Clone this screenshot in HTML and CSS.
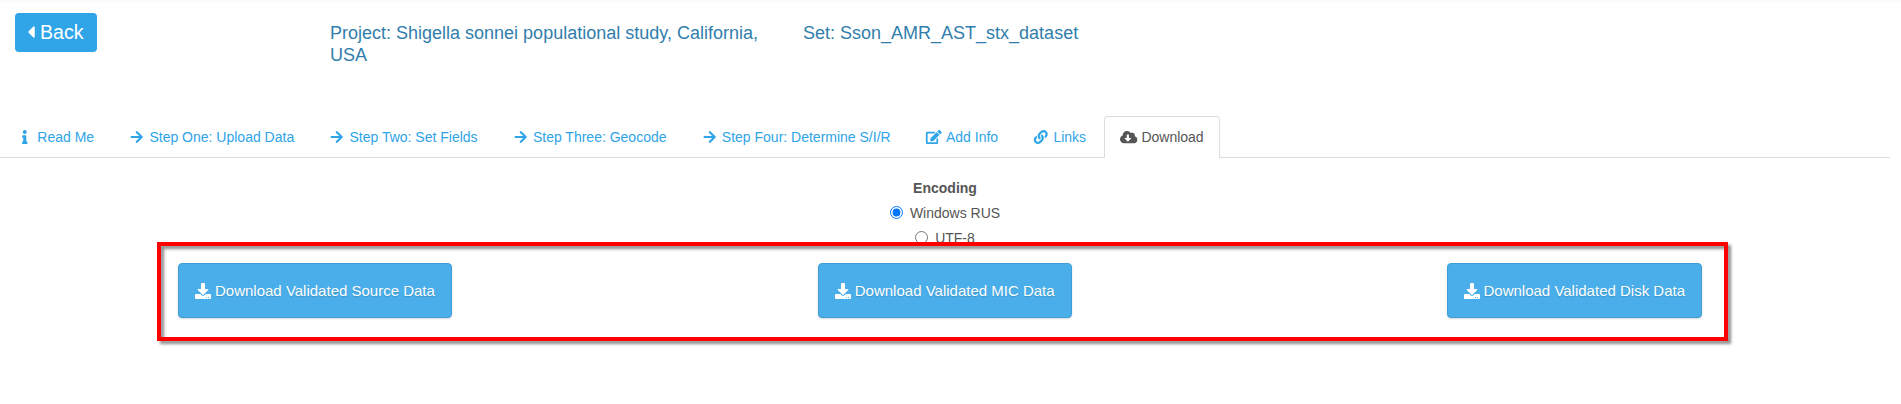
FILE: index.html
```html
<!DOCTYPE html>
<html lang="en">
<head>
<meta charset="utf-8">
<title>Download</title>
<link rel="stylesheet" href="styles.css">
</head>
<body>
<svg class="sprite" aria-hidden="true">
  <symbol id="caret" viewBox="0 0 192 512"><path d="M192 127.338v257.324c0 17.818-21.543 26.741-34.142 14.142L29.196 270.142c-7.81-7.81-7.81-20.474 0-28.284l128.662-128.662c12.599-12.6 34.142-3.676 34.142 14.142z"/></symbol>
  <symbol id="info" viewBox="0 0 192 512"><path d="M20 424.229h20V279.771H20c-11.046 0-20-8.954-20-20V212c0-11.046 8.954-20 20-20h112c11.046 0 20 8.954 20 20v212.229h20c11.046 0 20 8.954 20 20V492c0 11.046-8.954 20-20 20H20c-11.046 0-20-8.954-20-20v-47.771c0-11.046 8.954-20 20-20zM96 0C56.235 0 24 32.235 24 72s32.235 72 72 72 72-32.235 72-72S135.764 0 96 0z"/></symbol>
  <symbol id="arrow" viewBox="0 0 448 512"><path d="M190.5 66.9l22.2-22.2c9.4-9.4 24.6-9.4 33.9 0L441 239c9.4 9.4 9.4 24.6 0 33.9L246.6 467.3c-9.4 9.4-24.6 9.4-33.9 0l-22.2-22.2c-9.5-9.5-9.3-25 .4-34.3L311.4 296H24c-13.3 0-24-10.7-24-24v-32c0-13.3 10.7-24 24-24h287.4L190.9 101.2c-9.8-9.3-10-24.8-.4-34.3z"/></symbol>
  <symbol id="edit" viewBox="0 0 576 512"><path d="M402.6 83.2l90.2 90.2c3.8 3.8 3.8 10 0 13.8L274.4 405.600l-92.800 10.300c-12.400 1.400-22.900-9.100-21.500-21.500l10.300-92.800L388.800 83.200c3.800-3.800 10-3.800 13.800 0zm162-22.900l-48.800-48.800c-15.200-15.200-39.900-15.200-55.200 0l-35.400 35.400c-3.800 3.800-3.800 10 0 13.800l90.200 90.200c3.800 3.800 10 3.800 13.800 0l35.400-35.400c15.200-15.300 15.200-40 0-55.200zM384 346.200V448H64V128h229.800c3.200 0 6.200-1.300 8.500-3.500l40-40c7.600-7.600 2.200-20.500-8.500-20.500H48C21.500 64 0 85.500 0 112v352c0 26.500 21.500 48 48 48h352c26.500 0 48-21.500 48-48V306.200c0-10.700-12.900-16-20.500-8.500l-40 40c-2.200 2.300-3.500 5.300-3.500 8.500z"/></symbol>
  <symbol id="link" viewBox="0 0 512 512"><path d="M326.612 185.391c59.747 59.809 58.927 155.698.36 214.590-.11.120-.240.250-.360.370l-67.200 67.200c-59.270 59.270-155.699 59.262-214.960 0-59.270-59.260-59.270-155.700 0-214.960l37.106-37.106c9.840-9.840 26.786-3.300 27.294 10.606.648 17.722 3.826 35.527 9.690 52.721 1.986 5.822.567 12.262-3.783 16.612l-13.087 13.087c-28.026 28.026-28.905 73.660-1.155 101.960 28.024 28.579 74.086 28.749 102.325.510l67.200-67.190c28.191-28.191 28.073-73.757 0-101.830-3.701-3.694-7.429-6.564-10.341-8.569a16.037 16.037 0 0 1-6.947-12.606c-.396-10.567 3.348-21.456 11.698-29.806l21.054-21.055c5.521-5.521 14.182-6.199 20.584-1.731a152.482 152.482 0 0 1 20.522 17.197zM467.547 44.449c-59.261-59.262-155.690-59.270-214.960 0l-67.200 67.200c-.120.120-.250.250-.360.370-58.566 58.892-59.387 154.781.360 214.590a152.454 152.454 0 0 0 20.521 17.196c6.402 4.468 15.064 3.789 20.584-1.731l21.054-21.055c8.350-8.350 12.094-19.239 11.698-29.806a16.037 16.037 0 0 0-6.947-12.606c-2.912-2.005-6.640-4.875-10.341-8.569-28.073-28.073-28.191-73.639 0-101.830l67.200-67.190c28.239-28.239 74.300-28.069 102.325.510 27.750 28.300 26.872 73.934-1.155 101.960l-13.087 13.087c-4.350 4.350-5.769 10.790-3.783 16.612 5.864 17.194 9.042 34.999 9.690 52.721.509 13.906 17.454 20.446 27.294 10.606l37.106-37.106c59.271-59.259 59.271-155.699.001-214.959z"/></symbol>
  <symbol id="cloud" viewBox="0 0 640 512"><path d="M537.6 226.6c4.1-10.700 6.400-22.400 6.400-34.600 0-53-43-96-96-96-19.700 0-38.100 6-53.300 16.200C367 64.200 315.300 32 256 32c-88.400 0-160 71.600-160 160 0 2.700.1 5.400.2 8.100C40.200 219.800 0 273.200 0 336c0 79.500 64.500 144 144 144h368c70.700 0 128-57.300 128-128 0-61.900-44-113.600-102.400-125.400zm-132.900 88.700L299.300 420.700c-6.200 6.200-16.400 6.200-22.600 0L171.300 315.300c-10.100-10.100-2.900-27.300 11.300-27.300H248V176c0-8.800 7.200-16 16-16h48c8.800 0 16 7.200 16 16v112h65.400c14.200 0 21.400 17.200 11.300 27.300z"/></symbol>
  <symbol id="download" viewBox="0 0 512 512"><path d="M216 0h80c13.300 0 24 10.700 24 24v168h87.700c17.800 0 26.700 21.500 14.100 34.100L269.700 378.300c-7.500 7.500-19.800 7.500-27.300 0L90.100 226.100c-12.600-12.600-3.700-34.100 14.100-34.100H192V24c0-13.300 10.700-24 24-24zm296 376v112c0 13.300-10.700 24-24 24H24c-13.300 0-24-10.700-24-24V376c0-13.300 10.700-24 24-24h146.700l49 49c20.100 20.100 52.500 20.100 72.600 0l49-49H488c13.300 0 24 10.700 24 24zm-124 88c0-11-9-20-20-20s-20 9-20 20 9 20 20 20 20-9 20-20zm64 0c0-11-9-20-20-20s-20 9-20 20 9 20 20 20 20-9 20-20z"/></symbol>
</svg>

<header class="header">
  <div class="back-cell"><a class="back"><svg class="caret"><use href="#caret"/></svg>Back</a></div>
  <h4 class="title project">Project: Shigella sonnei populational study, California, USA</h4>
  <h4 class="title">Set: Sson_AMR_AST_stx_dataset</h4>
</header>

<nav class="tabs">
  <a class="tab"><svg class="icon"><use href="#info"/></svg>Read Me</a>
  <a class="tab"><svg class="icon"><use href="#arrow"/></svg>Step One: Upload Data</a>
  <a class="tab"><svg class="icon"><use href="#arrow"/></svg>Step Two: Set Fields</a>
  <a class="tab"><svg class="icon"><use href="#arrow"/></svg>Step Three: Geocode</a>
  <a class="tab"><svg class="icon"><use href="#arrow"/></svg>Step Four: Determine S/I/R</a>
  <a class="tab"><svg class="icon"><use href="#edit"/></svg>Add Info</a>
  <a class="tab"><svg class="icon"><use href="#link"/></svg>Links</a>
  <a class="tab active"><svg class="icon"><use href="#cloud"/></svg>Download</a>
</nav>

<main class="content">
  <div class="encoding">
    <strong class="legend">Encoding</strong>
    <label class="option"><input class="radio" type="radio" name="enc" checked>Windows RUS</label>
    <label class="option"><input class="radio" type="radio" name="enc">UTF-8</label>
  </div>
  <div class="downloads">
    <a class="button"><svg class="button-icon"><use href="#download"/></svg>Download Validated Source Data</a>
    <a class="button middle"><svg class="button-icon"><use href="#download"/></svg>Download Validated MIC Data</a>
    <a class="button"><svg class="button-icon"><use href="#download"/></svg>Download Validated Disk Data</a>
    <div class="highlight"></div>
  </div>
</main>
</body>
</html>
```
FILE: styles.css
```css
* { box-sizing: border-box; }

body {
  margin: 0;
  height: 404px;
  overflow: hidden;
  background: linear-gradient(#fafafa, #fff 4px);
  color: #555;
  font: 14px/20px "Liberation Sans", Arial, sans-serif;
}

.sprite { display: none; }
svg { fill: currentColor; flex: none; }

.header {
  display: flex;
  height: 116px;
  padding: 13px 0 0 15px;
}
.back-cell { width: 315px; }
.back {
  display: inline-flex;
  align-items: center;
  width: 82px;
  height: 39px;
  padding: 0 0 1px 12px;
  border-radius: 4px;
  background: #2fa4e7;
  color: #fff;
  font-size: 19.6px;
}
.caret { width: 8px; height: 20px; margin-right: 5px; }
.title {
  margin: 9px 0 0;
  color: #317eac;
  font-size: 18px;
  line-height: 22px;
  font-weight: normal;
}
.project { width: 443px; padding-right: 10px; margin-right: 30px; }

.tabs {
  display: flex;
  gap: 2px;
  width: 1890px;
  height: 42px;
  border-bottom: 1px solid #ddd;
}
.tab {
  display: flex;
  align-items: center;
  height: 42px;
  padding: 0 15px 1px;
  border: 1px solid transparent;
  border-bottom: 0;
  border-radius: 4px 4px 0 0;
  color: #2fa4e7;
  white-space: nowrap;
}
.tab.active { border-color: #ddd; background: #fff; color: #555; }
.icon { width: 17.5px; height: 14px; margin-right: 3.8px; }

.encoding {
  display: flex;
  flex-direction: column;
  align-items: center;
  height: 105px;
  padding: 20px 11px 0 0;
}
.legend { height: 24px; }
.option { display: flex; align-items: center; height: 25px; padding-bottom: 4px; }
.radio { width: 13px; height: 13px; margin: 0 7px 0 0; }

.downloads {
  position: relative;
  display: flex;
  justify-content: space-between;
  width: 1524px;
  margin-left: 178px;
}
.button {
  display: flex;
  align-items: center;
  height: 55px;
  padding: 0 16px;
  border: 1px solid #3f9fd6;
  border-radius: 4px;
  background: #49aee9;
  box-shadow: 0 1px 2px rgba(0, 0, 0, .15);
  color: #fff;
  font-size: 15px;
  text-shadow: 0 1px 1px rgba(0, 0, 0, .15);
  white-space: nowrap;
}
.middle { margin-right: 9px; }
.button-icon { width: 16px; height: 16px; margin-right: 4px; }
.highlight {
  position: absolute;
  inset: -21px -26px -23px -21px;
  border: 4px solid #f00;
  filter: drop-shadow(3px 3px 1.5px rgba(0, 0, 0, .45));
  pointer-events: none;
}
```
